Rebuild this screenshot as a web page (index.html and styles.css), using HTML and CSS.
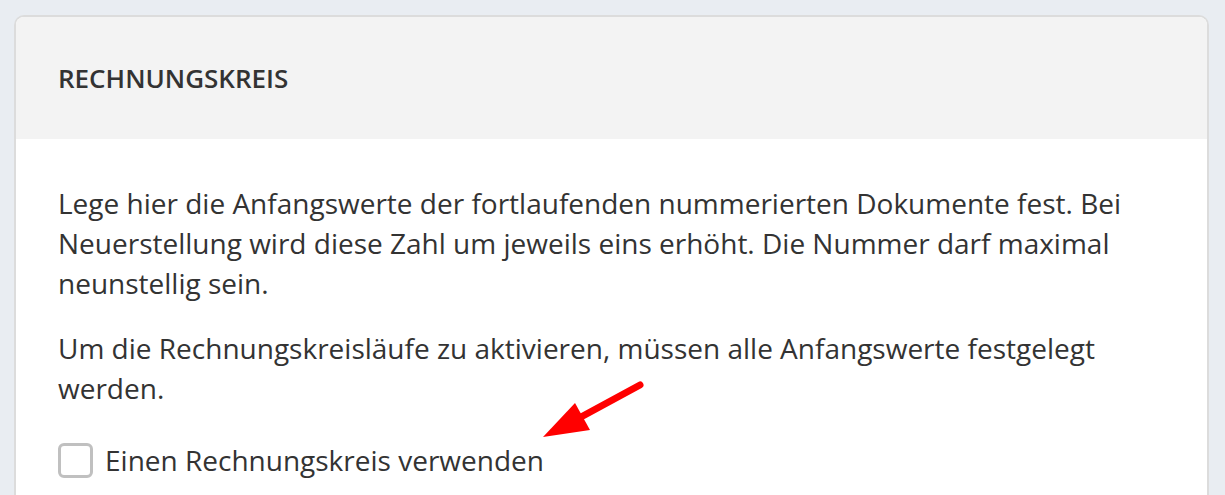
FILE: index.html
```html
<!DOCTYPE html>
<html lang="de">
<head>
<meta charset="UTF-8">
<meta name="viewport" content="width=device-width, initial-scale=1.0">
<title>Rechnungskreis</title>
<link rel="stylesheet" href="styles.css">
</head>
<body>

<div class="card">
    <div class="card-header">
        <h2>Rechnungskreis</h2>
    </div>

    <div class="card-body">
        <p>Lege hier die Anfangswerte der fortlaufenden nummerierten Dokumente fest. Bei Neuerstellung wird diese Zahl um jeweils eins erhöht. Die Nummer darf maximal neunstellig sein.</p>
        <p>Um die Rechnungskreisläufe zu aktivieren, müssen alle Anfangswerte festgelegt werden.</p>

        <label class="check">
            <input type="checkbox" id="useCircle">
            <span class="box"></span>
            <span>Einen Rechnungskreis verwenden</span>
        </label>
    </div>

    <!-- annotation arrow -->
    <svg class="arrow" width="110" height="70" viewBox="0 0 110 70">
        <line x1="99" y1="8" x2="40" y2="40" stroke="#ff0000" stroke-width="7" stroke-linecap="round"/>
        <polygon points="2,60 34,26 49,53" fill="#ff0000"/>
    </svg>
</div>

</body>
</html>
```

FILE: styles.css
```css
body {
    font-family: "Open Sans", "Liberation Sans", sans-serif;
    background-color: #e9edf2;
    margin: 0;
    padding: 15px 16px 0 14px;
    color: #333;
}

.card {
    position: relative;
    background-color: #fff;
    border: 2px solid #dcdcdc;
    border-bottom: none;
    border-radius: 10px 10px 0 0;
}

.card-header {
    background-color: #f3f3f3;
    height: 122px;
    padding: 0 42px;
    display: flex;
    align-items: center;
    border-radius: 8px 8px 0 0;
}

.card-header h2 {
    margin: 0;
    font-size: 26px;
    font-weight: 600;
    text-transform: uppercase;
    color: #333;
}

.card-body {
    padding: 44px 42px 20px 42px;
}

.card-body p {
    margin: 0 0 25px 0;
    font-size: 28px;
    line-height: 40px;
    color: #333;
}

.check {
    display: flex;
    align-items: center;
    gap: 12px;
    margin-top: 32px;
    font-size: 28px;
    line-height: 40px;
    cursor: pointer;
}

.check input {
    display: none;
}

.check .box {
    width: 29px;
    height: 29px;
    border: 3px solid #c0c0c0;
    border-radius: 6px;
    box-sizing: content-box;
}

.arrow {
    position: absolute;
    left: 525px;
    top: 360px;
}
```
